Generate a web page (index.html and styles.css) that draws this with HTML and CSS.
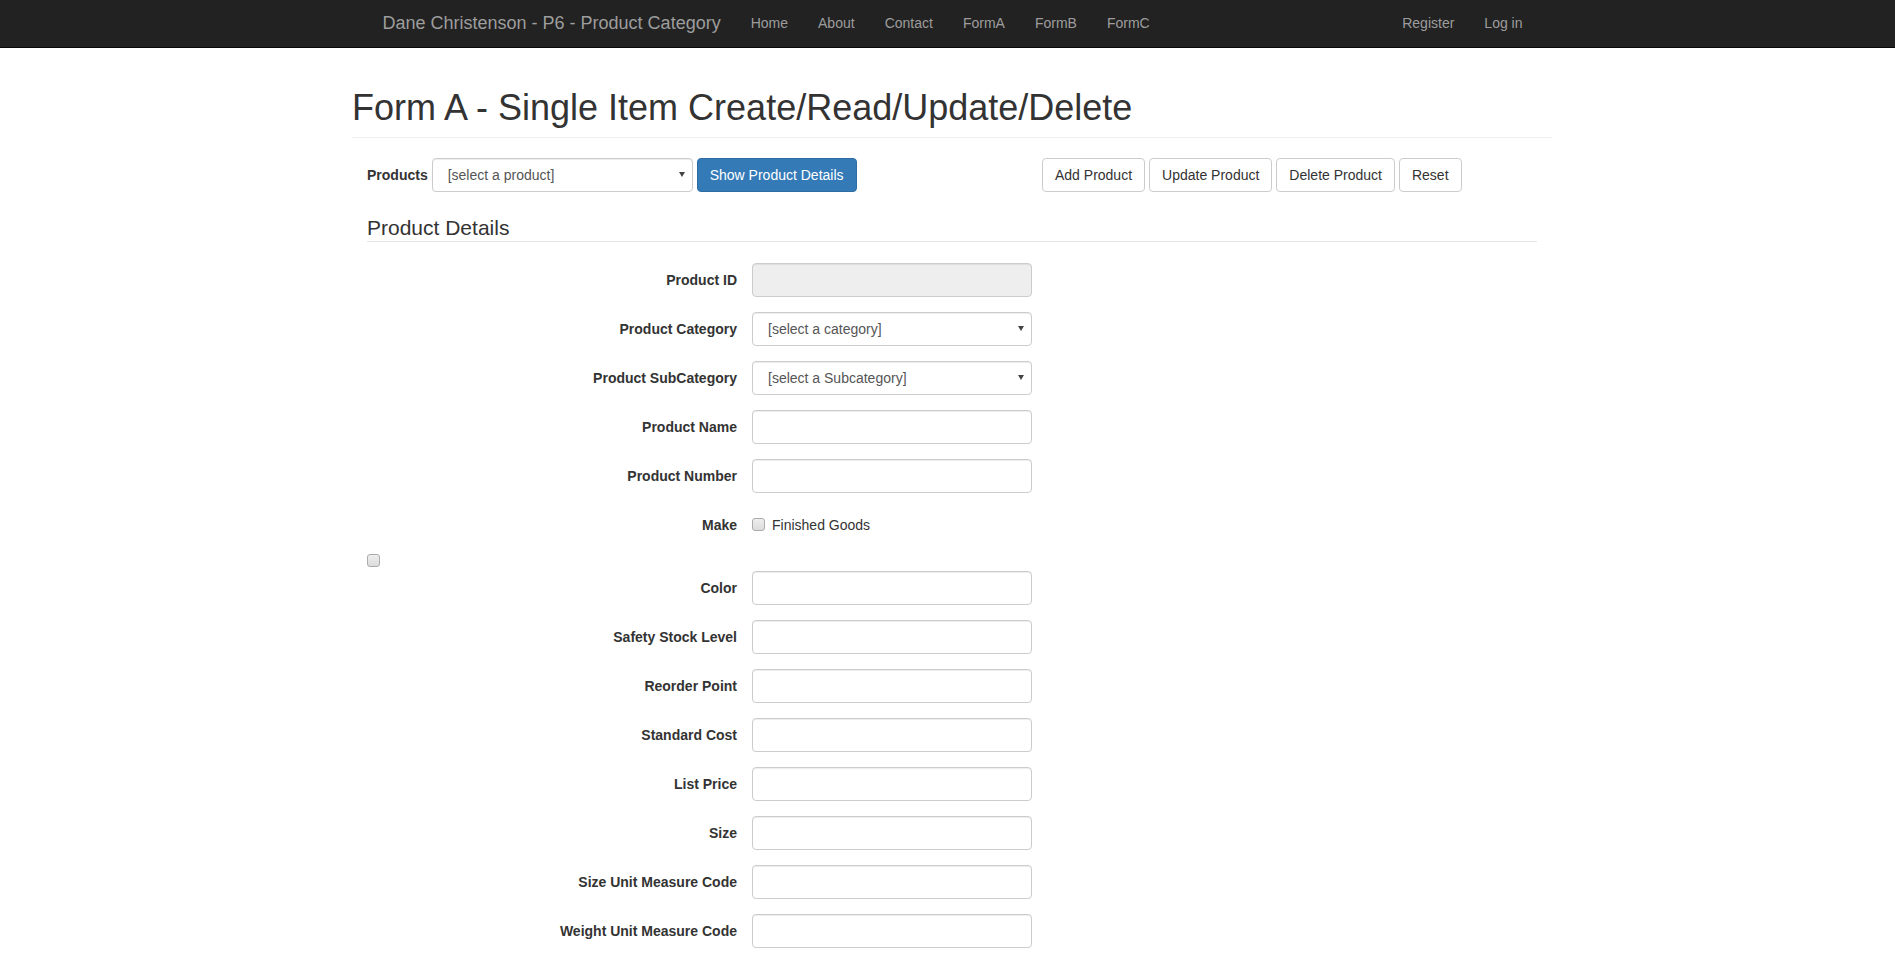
FILE: index.html
```html
<!DOCTYPE html>
<html lang="en">
<head>
<meta charset="utf-8">
<title>Form A - Dane Christenson - P6 - Product Category</title>
<link rel="stylesheet" href="styles.css">
</head>
<body>
<header class="navbar">
  <div class="nav-container">
    <a class="brand" href="#">Dane Christenson - P6 - Product Category</a>
    <ul class="nav">
      <li><a href="#">Home</a></li>
      <li><a href="#">About</a></li>
      <li><a href="#">Contact</a></li>
      <li><a href="#">FormA</a></li>
      <li><a href="#">FormB</a></li>
      <li><a href="#">FormC</a></li>
    </ul>
    <ul class="nav nav-right">
      <li><a href="#">Register</a></li>
      <li><a href="#">Log in</a></li>
    </ul>
  </div>
</header>

<main class="page">
  <h1 class="page-header">Form A - Single Item Create/Read/Update/Delete</h1>
  <div class="content">
    <div class="toolbar">
      <div class="toolbar-left">
        <label class="toolbar-label" for="products">Products</label>
        <div class="select-wrap select-products">
          <select id="products" class="form-control"><option>[select a product]</option></select>
        </div>
        <button class="btn btn-primary" type="button">Show Product Details</button>
      </div>
      <div class="toolbar-right">
        <button class="btn btn-default" type="button">Add Product</button>
        <button class="btn btn-default" type="button">Update Product</button>
        <button class="btn btn-default" type="button">Delete Product</button>
        <button class="btn btn-default" type="button">Reset</button>
      </div>
    </div>

    <fieldset class="details">
      <legend>Product Details</legend>

      <div class="form-group">
        <label class="control-label">Product ID</label>
        <input class="form-control" type="text" disabled>
      </div>
      <div class="form-group">
        <label class="control-label">Product Category</label>
        <div class="select-wrap">
          <select class="form-control"><option>[select a category]</option></select>
        </div>
      </div>
      <div class="form-group">
        <label class="control-label">Product SubCategory</label>
        <div class="select-wrap">
          <select class="form-control"><option>[select a Subcategory]</option></select>
        </div>
      </div>
      <div class="form-group">
        <label class="control-label">Product Name</label>
        <input class="form-control" type="text">
      </div>
      <div class="form-group">
        <label class="control-label">Product Number</label>
        <input class="form-control" type="text">
      </div>
      <div class="form-group">
        <label class="control-label">Make</label>
        <div class="checkbox">
          <label><input type="checkbox" class="cb"> Finished Goods</label>
        </div>
      </div>
      <div class="stray"><input type="checkbox" class="cb"></div>
      <div class="form-group">
        <label class="control-label">Color</label>
        <input class="form-control" type="text">
      </div>
      <div class="form-group">
        <label class="control-label">Safety Stock Level</label>
        <input class="form-control" type="text">
      </div>
      <div class="form-group">
        <label class="control-label">Reorder Point</label>
        <input class="form-control" type="text">
      </div>
      <div class="form-group">
        <label class="control-label">Standard Cost</label>
        <input class="form-control" type="text">
      </div>
      <div class="form-group">
        <label class="control-label">List Price</label>
        <input class="form-control" type="text">
      </div>
      <div class="form-group">
        <label class="control-label">Size</label>
        <input class="form-control" type="text">
      </div>
      <div class="form-group">
        <label class="control-label">Size Unit Measure Code</label>
        <input class="form-control" type="text">
      </div>
      <div class="form-group">
        <label class="control-label">Weight Unit Measure Code</label>
        <input class="form-control" type="text">
      </div>
    </fieldset>
  </div>
</main>
</body>
</html>
```

FILE: styles.css
```css
* {
  box-sizing: border-box;
}

html, body {
  margin: 0;
  padding: 0;
  background: #fff;
}

body {
  font-family: "Liberation Sans", Arial, Helvetica, sans-serif;
  font-size: 14px;
  line-height: 20px;
  color: #333;
  padding-bottom: 20px;
}

a {
  text-decoration: none;
}

/* ---------- navbar ---------- */
.navbar {
  background: #222;
  border-bottom: 1px solid #080808;
  height: 48px;
}

.nav-container {
  width: 1170px;
  margin-left: calc(50% - 580px);
  padding: 0 15px;
  display: flex;
  align-items: flex-start;
}

.brand {
  display: block;
  margin-left: -15px;
  padding: 13px 15px 14px;
  font-size: 18px;
  line-height: 20px;
  color: #9d9d9d;
}

.nav {
  list-style: none;
  margin: 0;
  padding: 0;
  display: flex;
}

.nav a {
  display: block;
  padding: 13px 15px 14px;
  line-height: 20px;
  color: #9d9d9d;
}

.nav-right {
  margin-left: auto;
  margin-right: -15px;
}

/* ---------- page ---------- */
.page {
  width: 1200px;
  margin-left: calc(50% - 595.5px);
}

.page-header {
  margin: 40px 0 20px;
  padding-bottom: 9px;
  border-bottom: 1px solid #eee;
  font-size: 36px;
  font-weight: 500;
  line-height: 1.1;
  color: #333;
}

.content {
  padding: 0 15px;
}

/* ---------- toolbar ---------- */
.toolbar {
  display: flex;
  align-items: center;
  margin-bottom: 29px;
}

.toolbar-left {
  width: 675px;
  display: flex;
  align-items: center;
  gap: 4px;
}

.toolbar-label {
  font-weight: bold;
}

.toolbar-right {
  display: flex;
  gap: 4px;
}

.btn {
  font-family: inherit;
  font-size: 14px;
  line-height: 20px;
  padding: 6px 12px;
  border: 1px solid transparent;
  border-radius: 4px;
  cursor: pointer;
  height: 34px;
}

.btn-default {
  background: #fff;
  border-color: #ccc;
  color: #333;
}

.btn-primary {
  background: #337ab7;
  border-color: #2e6da4;
  color: #fff;
}

/* ---------- form controls ---------- */
.form-control {
  display: block;
  width: 280px;
  height: 34px;
  padding: 6px 12px;
  font-family: inherit;
  font-size: 14px;
  line-height: 20px;
  color: #555;
  background: #fff;
  border: 1px solid #ccc;
  border-radius: 4px;
  box-shadow: inset 0 1px 1px rgba(0, 0, 0, 0.075);
  margin: 0;
}

.form-control:disabled {
  background: #eee;
}

.select-wrap {
  position: relative;
  width: 280px;
}

.select-wrap select {
  -webkit-appearance: none;
  appearance: none;
  width: 100%;
  padding-left: 15px;
}

.select-wrap::after {
  content: "";
  position: absolute;
  right: 8px;
  top: 14px;
  border-left: 3px solid transparent;
  border-right: 3px solid transparent;
  border-top: 5px solid #444;
  pointer-events: none;
}

.select-products {
  width: 261px;
}

/* ---------- fieldset ---------- */
.details {
  border: 0;
  margin: 0;
  padding: 0;
  min-width: 0;
}

.details legend {
  display: block;
  width: 100%;
  padding: 0 0 7px;
  margin-bottom: 21px;
  font-size: 21px;
  line-height: 13px;
  color: #333;
  border-bottom: 1px solid #e5e5e5;
}

.form-group {
  display: flex;
  margin-bottom: 15px;
}

.control-label {
  width: 385px;
  padding: 7px 15px 0 0;
  text-align: right;
  font-weight: bold;
  line-height: 20px;
}

.checkbox {
  padding-top: 7px;
  min-height: 27px;
}

.checkbox label {
  display: flex;
  align-items: center;
  gap: 7px;
  line-height: 20px;
  color: #333;
}

.cb {
  -webkit-appearance: none;
  appearance: none;
  width: 13px;
  height: 13px;
  margin: 0;
  border: 1px solid #ababab;
  border-radius: 3px;
  background: linear-gradient(#eeeeee, #dcdcdc);
}

.stray {
  height: 21px;
  padding-top: 4px;
}

.stray .cb {
  display: block;
}
```
